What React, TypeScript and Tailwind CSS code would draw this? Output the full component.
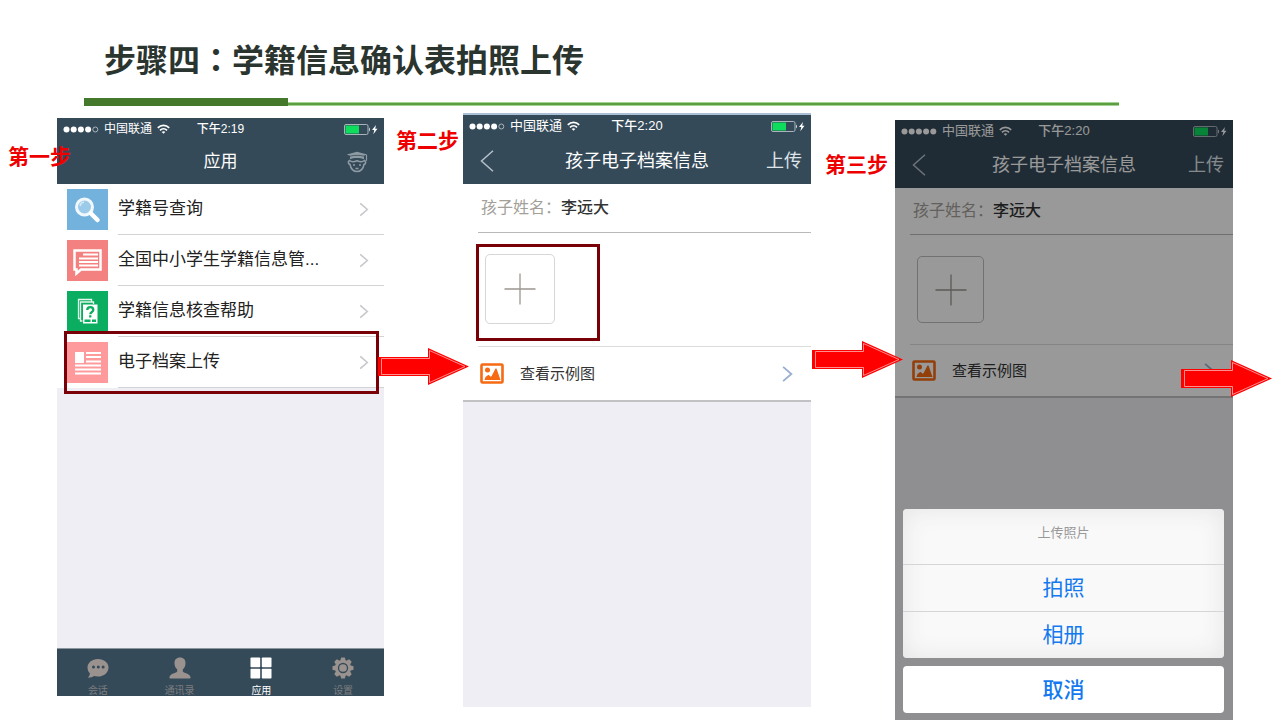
import type { ReactNode } from 'react';
import clsx from 'clsx';

const apps = [
  { name: '学籍号查询', color: 'bg-[#74b2de]', icon: <SearchIcon /> },
  { name: '全国中小学生学籍信息管...', color: 'bg-[#f2817f]', icon: <MessageIcon /> },
  { name: '学籍信息核查帮助', color: 'bg-[#0bae60]', icon: <HelpIcon /> },
  { name: '电子档案上传', color: 'bg-[#ff9a9c]', icon: <ArticleIcon />, marked: true },
];

const tabs = [
  { name: '会话', icon: <ChatIcon /> },
  { name: '通讯录', icon: <ContactIcon /> },
  { name: '应用', icon: <AppsIcon />, active: true },
  { name: '设置', icon: <GearIcon /> },
];

/* ICONOS DE LA LISTA */
function SearchIcon() {
  return (
    <svg viewBox="0 0 41 41" className="size-full" fill="none" aria-hidden="true">
      <circle cx="17.5" cy="18" r="8" fill="#9ccbea" stroke="#f1f8fd" strokeWidth="3" />
      <path d="M13 17a5 5 0 0 1 4-4" stroke="#d5eaf8" strokeWidth="1.5" />
      <path d="M24 24.5l6.500 6.500" stroke="#fff" strokeWidth="4.500" strokeLinecap="round" />
    </svg>
  );
}

function MessageIcon() {
  return (
    <svg viewBox="0 0 41 41" className="size-full" fill="none" stroke="#fff" aria-hidden="true">
      <path d="M7.500 10.500h26v19H14l-4.500 4v-4h-2z" strokeWidth="2.500" />
      <path d="M16 14.500h15M12 18.500h19M12 22h19M12 25.500h19" strokeWidth="2" />
    </svg>
  );
}

function HelpIcon() {
  return (
    <svg viewBox="0 0 41 41" className="size-full" fill="none" aria-hidden="true">
      <path d="M13.500 27.500h-2V8.500h13v2M15.500 30h-2V11h13v2" stroke="#e4f7ec" strokeWidth="1.300" />
      <path d="M16 13.500h14.500v19H16z" fill="#fff" />
      <path d="M20.300 19c0-3.800 6-3.800 6 0 0 2.200-3 1.900-3 4.300" stroke="#0bae60" strokeWidth="2.300" />
      <path d="M22.100 24.300h2.300v2.200h-2.300zM17.500 28.500h6v2.500h-6zM25 28.500h4v2.500h-4z" fill="#0bae60" />
    </svg>
  );
}

function ArticleIcon() {
  return (
    <svg viewBox="0 0 41 41" className="size-full" fill="none" stroke="#fff" strokeWidth="2" aria-hidden="true">
      <path d="M8 10h9v11H8z" fill="#fff" stroke="none" />
      <path d="M19 11h15M19 15h15M19 19.500h15M8 23.500h26M8 27.500h26M8 31.500h26" />
    </svg>
  );
}

/* ICONOS DE LA BARRA INFERIOR */
function ChatIcon() {
  return (
    <svg viewBox="0 0 24 22" className="h-[22px] w-6" aria-hidden="true">
      <path d="M12 2C6 2 1.500 5.800 1.500 10.500c0 2.500 1 4.500 2.500 6-.3 1.500-1 3-2 4.200 2.500 0 4.500-.6 6-1.600 1.200.3 2.500.5 4 .5 6 0 10.500-4.200 10.500-9.100S18 2 12 2z" fill="currentColor" />
      <circle cx="7.500" cy="10" r="1.500" fill="#354a59" />
      <circle cx="12.300" cy="10" r="1.500" fill="#354a59" />
      <circle cx="17.100" cy="10" r="1.500" fill="#354a59" />
    </svg>
  );
}

function ContactIcon() {
  return (
    <svg viewBox="0 0 24 22" className="h-[22px] w-6" fill="currentColor" aria-hidden="true">
      <path d="M12 .5c-3.600 0-5.500 2.300-5.500 5.500 0 2.700 1 5 2.700 6.300v2.200c-.5 1.500-7.200 2-7.700 5.500-.1 1 .3 1.500 1 1.500h19c.7 0 1.100-.5 1-1.500-.5-3.500-7.200-4-7.700-5.500v-2.200c1.700-1.300 2.700-3.600 2.700-6.300 0-3.200-1.900-5.500-5.500-5.500z" />
    </svg>
  );
}

function AppsIcon() {
  return (
    <svg viewBox="0 0 24 22" className="h-[22px] w-6" fill="currentColor" aria-hidden="true">
      <rect x="1.500" y="0.500" width="9.700" height="9.700" rx="0.800" />
      <rect x="12.800" y="0.500" width="9.700" height="9.700" rx="0.800" />
      <rect x="1.500" y="11.800" width="9.700" height="9.700" rx="0.800" />
      <rect x="12.800" y="11.800" width="9.700" height="9.700" rx="0.800" />
    </svg>
  );
}

function GearIcon() {
  return (
    <svg viewBox="-12 -11 24 22" className="h-[22px] w-6" aria-hidden="true">
      <circle r="8" fill="currentColor" />
      {[0, 45, 90, 135, 180, 225, 270, 315].map((angle) => (
        <path key={angle} d="M-2.800-7l1-3.500h3.600l1 3.500z" fill="currentColor" transform={`rotate(${angle})`} />
      ))}
      <circle r="4.500" fill="none" stroke="#354a59" strokeWidth="1.300" />
    </svg>
  );
}

/* ICONOS COMUNES */
function Chevron({ className }: { className?: string }) {
  return (
    <svg viewBox="0 0 10 16" className={className} fill="none" stroke="currentColor" aria-hidden="true">
      <path d="M1 1.500L8.500 8 1 14.500" strokeWidth="1.700" />
    </svg>
  );
}

function GraduateIcon() {
  return (
    <svg viewBox="0 0 22 22" className="h-[22px] w-[22px]" fill="none" stroke="#8f9ba3" aria-hidden="true">
      <path d="M11 .8L.8 3.500 4 4.700v3.500c3-1.500 11-1.500 14 0V4.700l3.200-1.200z" fill="#8f9ba3" stroke="none" />
      <path d="M4 5.200c4-1.200 10-1.200 14 0" stroke="#354a59" strokeWidth="0.800" />
      <path d="M20.500 3.800v6" strokeWidth="1.200" />
      <path d="M3.500 9.500c-1.800.8-1.300 3.500.5 4 .8 4 3.500 7 7 7s6.200-3 7-7c1.800-.5 2.300-3.200.5-4-2 1.800-4.500 1.500-7.500.3-3 1.200-5.500 1.500-7.500-.3z" strokeWidth="1.600" />
      <path d="M7 14h2M13 14h2M9.500 17.500h3" strokeWidth="1.300" />
    </svg>
  );
}

function PictureIcon() {
  return (
    <svg viewBox="0 0 24 21" className="h-[21px] w-6" aria-hidden="true">
      <rect x="1.500" y="1.500" width="21" height="18" rx="1" fill="none" stroke="#f56a12" strokeWidth="2.600" />
      <circle cx="7.500" cy="7" r="2.500" fill="#f56a12" />
      <path d="M4.500 17l1-3 3-2.300 2.200 2 1-.8L15.500 5.500h1L20.500 17z" fill="#f56a12" />
    </svg>
  );
}

function Arrow({ className }: { className: string }) {
  return (
    <svg viewBox="0 0 91 37" className={clsx('absolute z-20 h-[37px] w-[91px]', className)} aria-hidden="true">
      <path d="M0 9h50V0l41 18.500L50 37v-9H0z" fill="#fe0000" />
      <path d="M3.500 10.500h48V2.500l35.500 16-35.500 16v-8h-48z" fill="none" stroke="#ffb3b3" strokeWidth="0.800" />
    </svg>
  );
}

function StatusBar({ time, dots, className }: { time: string; dots: number; className: string }) {
  return (
    <div className={clsx('grid h-[22px] grid-cols-[1fr_auto_1fr] items-center px-[6px] text-white', className)}>
      <div className="flex items-center gap-[5px] whitespace-nowrap">
        <svg viewBox="0 0 36 7" className="h-[7px] w-9" aria-hidden="true">
          {[0, 1, 2, 3, 4].map((i) => (
            <circle
              key={i}
              cx={3.5 + i * 7.2}
              cy="3.500"
              r={i < dots ? 3 : 2.5}
              fill={i < dots ? '#fff' : 'none'}
              stroke={i < dots ? 'none' : '#c5cdd2'}
              strokeWidth="0.800"
            />
          ))}
        </svg>
        <span>中国联通</span>
        <svg viewBox="0 0 13 10" className="h-[10px] w-[13px]" fill="none" stroke="#fff" strokeWidth="1.700" aria-hidden="true">
          <path d="M.8 3.800c3.200-3.200 8.200-3.200 11.400 0M3 6.300c2-2 5-2 7 0" />
          <path d="M6.500 9.800L4.700 8c1-.9 2.600-.9 3.600 0z" fill="#fff" stroke="none" />
        </svg>
      </div>
      <span className="font-medium">{time}</span>
      <svg viewBox="0 0 34 11" className="h-[11px] w-[34px] justify-self-end" aria-hidden="true">
        <rect x="0.500" y="0.500" width="23.500" height="10" rx="1.500" fill="none" stroke="#a9b4ba" />
        <rect x="1.500" y="1.500" width="13.500" height="8" fill="#0ddc5c" />
        <path d="M25 3.500c1.300.5 1.300 3.500 0 4z" fill="#d5dadd" />
        <path d="M32 1l-4 5h2.300l-1 4.200 4.200-5.400h-2.300z" fill="#fff" />
      </svg>
    </div>
  );
}

function StepLabel({ children, className }: { children: ReactNode; className: string }) {
  return (
    <h2 className={clsx('relative z-10 whitespace-nowrap text-[21px] font-bold leading-6 text-[#ee0000]', className)}>
      {children}
    </h2>
  );
}

function AppsPhone() {
  return (
    <section className="mt-[5px] mb-6 flex min-w-0 flex-col bg-[#efeef4]">
      <header className="bg-[#354a59] text-white">
        <StatusBar time="下午2:19" dots={4} className="text-xs" />
        <div className="grid h-11 grid-cols-[1fr_auto_1fr] items-center px-4">
          <h3 className="col-start-2 text-[17px] leading-6">应用</h3>
          <button type="button" aria-label="个人" className="justify-self-end">
            <GraduateIcon />
          </button>
        </div>
      </header>

      <ul className="bg-white">
        {apps.map((app) => (
          <li key={app.name} className="relative">
            <a href="#" className="flex h-[51px] items-center gap-[10px] pl-[10px]">
              <span className={clsx('size-[41px] shrink-0', app.color)}>{app.icon}</span>
              <span className="flex h-full min-w-0 flex-1 items-center justify-between border-b border-[#d3d3d6] pr-[15px]">
                <span className="truncate text-[17px] leading-6 text-[#222]">{app.name}</span>
                <Chevron className="h-[15px] w-[10px] shrink-0 text-[#c7c7cc]" />
              </span>
            </a>
            {app.marked && (
              <div className="pointer-events-none absolute -inset-y-[6px] left-[7px] right-[5px] z-10 border-[3px] border-[#7a0008]" />
            )}
          </li>
        ))}
      </ul>

      <nav className="mt-auto grid h-12 grid-cols-4 border-t border-[#8a959c] bg-[#354a59]">
        {tabs.map((tab) => (
          <button
            key={tab.name}
            type="button"
            className={clsx('flex flex-col items-center pt-2', tab.active ? 'text-white' : 'text-[#9a928e]')}
          >
            {tab.icon}
            <span className={clsx('mt-1 text-[10px] leading-4', !tab.active && 'opacity-70')}>{tab.name}</span>
          </button>
        ))}
      </nav>
    </section>
  );
}

/* Pantalla del expediente: la comparten los pasos dos y tres */
function ArchiveScreen({ compact = false }: { compact?: boolean }) {
  return (
    <>
      <header className={clsx('bg-[#354a59] text-white', !compact && 'border-t-2 border-[#aac0d6]')}>
        <StatusBar time="下午2:20" dots={compact ? 5 : 4} className="text-[13px]" />
        <div className={clsx('grid grid-cols-[1fr_auto_1fr] items-center px-[9px]', compact ? 'h-[46px]' : 'h-[47px]')}>
          <button type="button" aria-label="返回" className="justify-self-start pl-2">
            <svg viewBox="0 0 14 22" className="h-[22px] w-[14px]" fill="none" stroke="#b4c0ca" strokeWidth="1.500" aria-hidden="true">
              <path d="M13 .7L1.500 11 13 21.300" />
            </svg>
          </button>
          <h3 className="text-lg leading-6">孩子电子档案信息</h3>
          <button type="button" className="justify-self-end text-lg leading-6 text-[#dfe4e8]">上传</button>
        </div>
      </header>

      <div className="bg-white pl-[15px]">
        <p className={clsx('flex items-center border-b border-[#b9b9b9] pl-[3px] text-base', compact ? 'h-[47px]' : 'h-[49px]')}>
          <span className="text-[#a39f99]">孩子姓名：</span>
          <span className="font-medium text-[#333]">李远大</span>
        </p>
        <div className={clsx('border-b border-[#dcdcdc] pt-[11px]', compact ? 'h-[110px]' : 'h-[114px]')}>
          <div className={clsx('-ml-[2px] h-[97px] w-[124px] border-[3px] px-[6px] py-[7px]', compact ? 'border-transparent' : 'border-[#7a0008]')}>
            <button
              type="button"
              aria-label="添加照片"
              className={clsx('grid place-items-center rounded-[5px] border', compact ? 'size-[67px] border-[#bdbdbd]' : 'size-[70px] border-[#d6d6d6]')}
            >
              <svg viewBox="0 0 32 32" className="size-8" stroke="#9b9790" strokeWidth="1.300" aria-hidden="true">
                <path d="M16 .5v31M.5 16h31" />
              </svg>
            </button>
          </div>
        </div>
      </div>

      <a
        href="#"
        className={clsx('flex items-center border-b-2 border-[#c2c2c4] bg-white pl-[17px] pr-[18px]', compact ? 'h-[53px]' : 'h-[55px]')}
      >
        <PictureIcon />
        <span className="ml-4 text-[15px] leading-6 text-[#333]">查看示例图</span>
        <Chevron className="ml-auto h-[18px] w-[11px] text-[#9ab0d0]" />
      </a>
    </>
  );
}

function PhotoSheet() {
  return (
    <div className="absolute inset-0 flex flex-col justify-end gap-2 bg-black/40 pr-[9px] pb-[7px] pl-2 text-center">
      <div className="divide-y divide-[#d5d5d7] overflow-hidden rounded-[4px] bg-[#f9f9f9] shadow-[inset_0_0_24px_#e4e4e4]">
        <p className="h-14 pt-[14px] text-[13px] leading-5 text-[#999]">上传照片</p>
        <button type="button" className="block h-[47px] w-full text-[21px] text-[#1479ee]">拍照</button>
        <button type="button" className="block h-[46px] w-full text-[21px] text-[#1479ee]">相册</button>
      </div>
      <button type="button" className="h-[47px] rounded-[4px] bg-white text-[21px] font-medium text-[#1479ee]">取消</button>
    </div>
  );
}

export default function App() {
  return (
    <main className="flex min-h-screen flex-col overflow-hidden bg-white font-['Liberation_Sans','Noto_Sans_CJK_SC',sans-serif]">
      {/* TÍTULO */}
      <header className="mb-[7px] pt-10">
        <h1 className="pl-[104px] text-[32px] font-bold leading-[42px] text-[#2b352f]">
          步骤四<span className="font-['Noto_Sans_CJK_TC',sans-serif] leading-none" lang="zh-TW">：</span>学籍信息确认表拍照上传
        </h1>
        <div className="mt-4 mr-[161px] ml-[84px] flex items-end">
          <div className="h-2 w-[204px] bg-[#44792b]" />
          <div className="h-1 flex-1 border-t border-b border-[#a5d394] bg-[#5c9f43]" />
        </div>
      </header>

      {/* PASOS */}
      <div className="grid flex-1 grid-cols-[57fr_327fr_79fr_348fr_84fr_338fr_47fr]">
        <div className="min-w-0 pt-8">
          <StepLabel className="pl-2">第一步</StepLabel>
        </div>
        <AppsPhone />

        <div className="relative min-w-0 pt-4">
          <StepLabel className="pl-3">第二步</StepLabel>
          <Arrow className="top-[235px] -left-[6px]" />
        </div>
        <section className="mb-[13px] flex min-w-0 flex-col bg-[#efeef4]">
          <ArchiveScreen />
        </section>

        <div className="relative min-w-0 pt-10">
          <StepLabel className="pl-[14px]">第三步</StepLabel>
          <Arrow className="top-[228px] left-[1px]" />
        </div>
        <section className="relative mt-[7px] flex min-w-0 flex-col bg-[#efeef4]">
          <ArchiveScreen compact />
          <PhotoSheet />
        </section>

        <div className="relative min-w-0">
          <Arrow className="top-[247px] -left-[52px]" />
        </div>
      </div>
    </main>
  );
}
